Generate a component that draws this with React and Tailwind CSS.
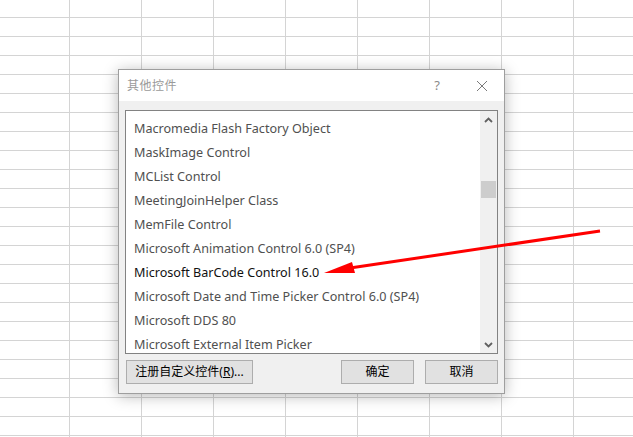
import React from "react";

const items = [
  "Macromedia Flash Factory Object",
  "MaskImage Control",
  "MCList Control",
  "MeetingJoinHelper Class",
  "MemFile Control",
  "Microsoft Animation Control 6.0 (SP4)",
  "Microsoft BarCode Control 16.0",
  "Microsoft Date and Time Picker Control 6.0 (SP4)",
  "Microsoft DDS 80",
  "Microsoft External Item Picker",
];

const font = { fontFamily: '"Noto Sans", "Noto Sans CJK SC", sans-serif' };

function Grid() {
  const rows = Array.from({ length: 24 });
  const cols = Array.from({ length: 9 });
  return (
    <div className="flex flex-col">
      {rows.map((_, r) => (
        <div
          key={r}
          className={`flex shrink-0 border-b border-[#d4d4d4] ${r === 0 ? "h-[18px]" : "h-[19px]"}`}
        >
          {cols.map((_, c) => (
            <div
              key={c}
              className={`shrink-0 h-full border-r border-[#d4d4d4] ${c === 0 ? "w-[70px]" : "w-[72px]"}`}
            />
          ))}
        </div>
      ))}
    </div>
  );
}

function Chevron({ up }) {
  return (
    <svg width="9" height="6" viewBox="0 0 9 6">
      <path
        d={up ? "M1 5 L4.5 1.5 L8 5" : "M1 1 L4.5 4.5 L8 1"}
        fill="none"
        stroke="#606060"
        strokeWidth="1.8"
      />
    </svg>
  );
}

export default function App() {
  return (
    <div className="relative w-[633px] h-[437px] overflow-hidden bg-white" style={font}>
      <Grid />

      <div className="absolute left-[118px] top-[69px] w-[387px] h-[325px] flex flex-col border border-[#9e9e9e] bg-[#f0f0f0] shadow-[0_2px_14px_rgba(0,0,0,0.28)]">
        <div className="h-[31px] shrink-0 bg-white flex items-center pl-[8px] pr-[16px]">
          <span className="text-[12px] text-[#9a9a9a] tracking-[0.5px]">其他控件</span>
          <span className="ml-auto text-[13px] text-[#8a8a8a] mr-[36px]">?</span>
          <svg width="12" height="12" viewBox="0 0 12 12">
            <path d="M1 1 L11 11 M11 1 L1 11" stroke="#7a7a7a" strokeWidth="1" />
          </svg>
        </div>

        <div className="flex-1 flex flex-col px-[6px] pt-[9px] pb-[11px]">
          <div className="h-[244px] shrink-0 border border-[#828282] bg-white flex overflow-hidden">
            <div className="flex-1 flex flex-col pt-[6px] pl-[8px] overflow-hidden">
              {items.map((t) => (
                <div
                  key={t}
                  className={`h-[24px] shrink-0 flex items-center text-[12.6px] whitespace-nowrap ${
                    t === "Microsoft BarCode Control 16.0" ? "text-[#111]" : "text-[#505050]"
                  }`}
                >
                  {t}
                </div>
              ))}
            </div>
            <div className="w-[17px] shrink-0 bg-[#f0f0f0] flex flex-col items-center">
              <div className="h-[17px] flex items-center justify-center">
                <Chevron up />
              </div>
              <div className="h-[53px]" />
              <div className="w-[15px] h-[17px] bg-[#cdcdcd]" />
              <div className="flex-1" />
              <div className="h-[17px] flex items-center justify-center">
                <Chevron />
              </div>
            </div>
          </div>

          <div className="mt-[6px] flex">
            <button className="ml-[1px] w-[127px] h-[24px] border border-[#adadad] bg-[#e1e1e1] text-[12px] text-[#000] flex items-center justify-center">
              注册自定义控件(<span className="underline">R</span>)...
            </button>
            <button className="ml-auto w-[73px] h-[24px] border border-[#adadad] bg-[#e1e1e1] text-[12px] text-[#000] flex items-center justify-center">
              确定
            </button>
            <button className="ml-[11px] w-[73px] h-[24px] border border-[#adadad] bg-[#e1e1e1] text-[12px] text-[#000] flex items-center justify-center">
              取消
            </button>
          </div>
        </div>
      </div>

      <svg className="absolute left-0 top-0" width="633" height="437" viewBox="0 0 633 437">
        <line x1="600" y1="231" x2="350" y2="268" stroke="#ff0000" strokeWidth="3" />
        <polygon points="324,273 352,262 355,273" fill="#ff0000" />
      </svg>
    </div>
  );
}
